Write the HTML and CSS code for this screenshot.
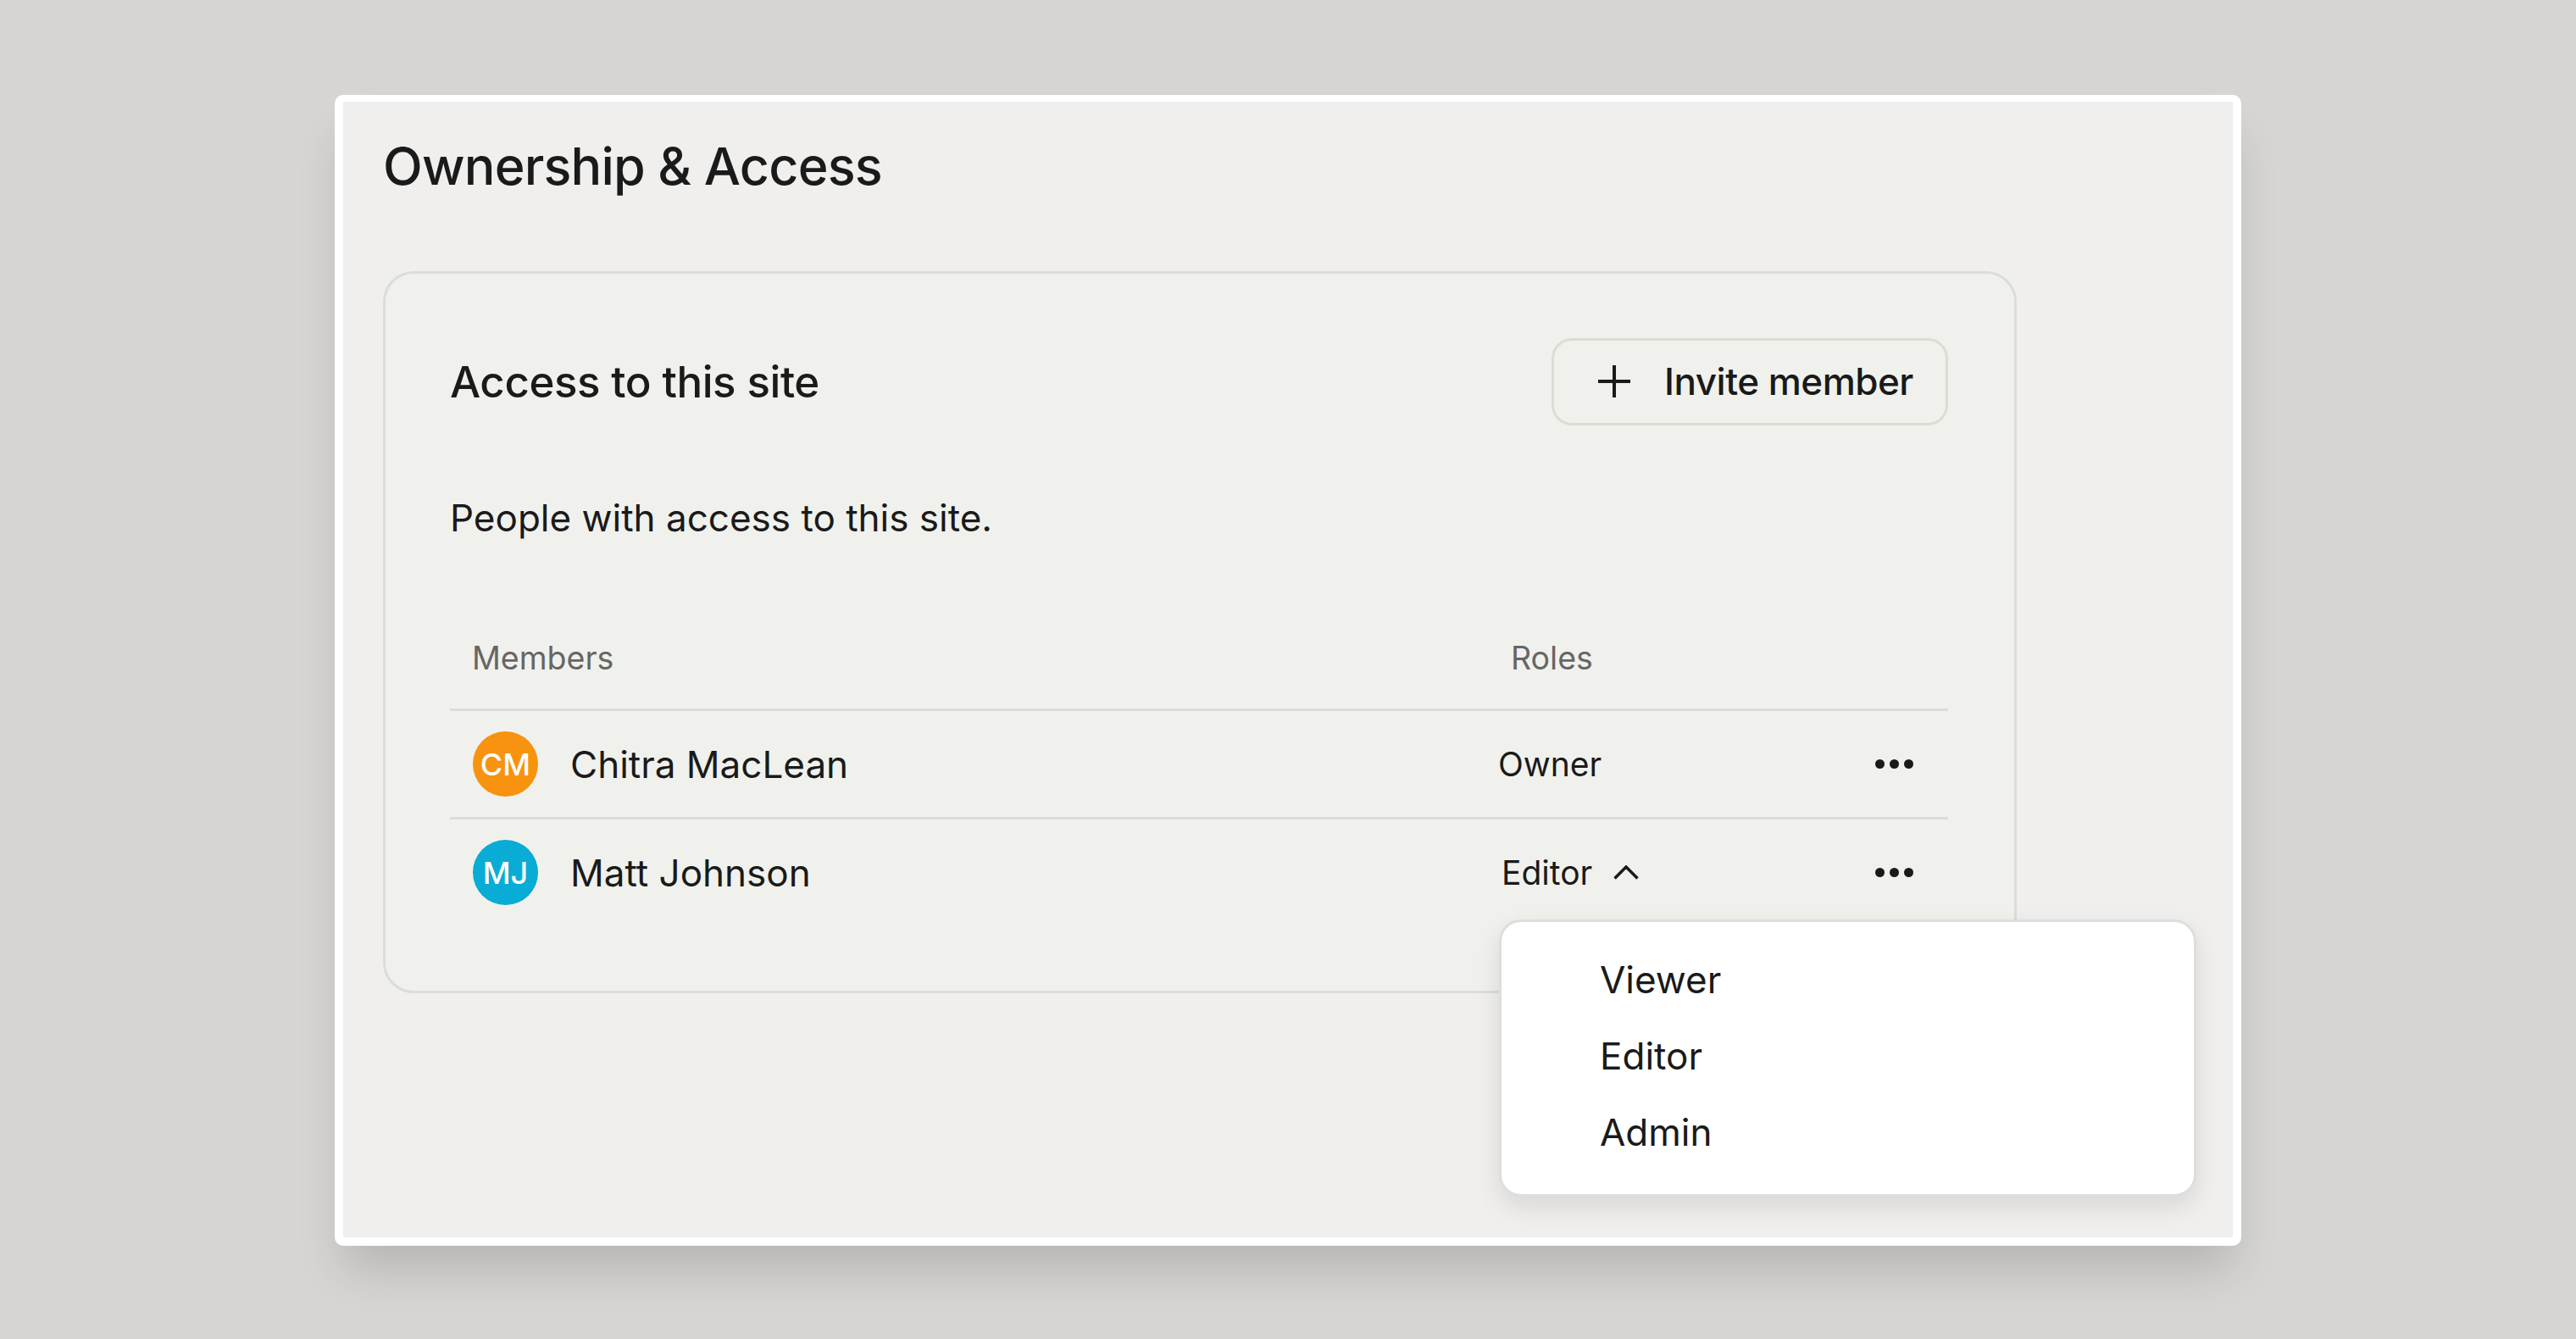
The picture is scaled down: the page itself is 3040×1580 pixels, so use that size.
FILE: index.html
```html
<!DOCTYPE html>
<html lang="en">
<head>
    <meta charset="UTF-8">
    <title>Ownership &amp; Access</title>
    <link rel="stylesheet" href="styles.css">
</head>
<body>
    <div class="window">
        <h1 class="page-title">Ownership &amp; Access</h1>

        <section class="card">
            <div class="card-header">
                <h2 class="card-title">Access to this site</h2>
                <button class="invite-btn" type="button">
                    <svg class="plus-icon" viewBox="0 0 38 38" aria-hidden="true">
                        <path d="M19 0v38M0 19h38"/>
                    </svg>
                    Invite member
                </button>
            </div>

            <p class="card-desc">People with access to this site.</p>

            <div class="table">
                <div class="table-head">
                    <span class="col-members">Members</span>
                    <span class="col-roles">Roles</span>
                </div>

                <div class="table-row">
                    <div class="member">
                        <span class="avatar avatar-orange">CM</span>
                        <span class="member-name">Chitra MacLean</span>
                    </div>
                    <div class="role role-owner">Owner</div>
                    <div class="more"><i></i><i></i><i></i></div>
                </div>

                <div class="table-row">
                    <div class="member">
                        <span class="avatar avatar-blue">MJ</span>
                        <span class="member-name">Matt Johnson</span>
                    </div>
                    <div class="role role-editor">
                        Editor
                        <svg class="chevron" viewBox="0 0 30 17" aria-hidden="true">
                            <path d="M1.5 15.5 15 2l13.500 13.500"/>
                        </svg>
                        <ul class="role-menu">
                            <li>Viewer</li>
                            <li>Editor</li>
                            <li>Admin</li>
                        </ul>
                    </div>
                    <div class="more"><i></i><i></i><i></i></div>
                </div>
            </div>
        </section>
    </div>
</body>
</html>
```

FILE: styles.css
```css
* {
    box-sizing: border-box;
}

body {
    margin: 0;
    height: 1580px;
    overflow: hidden;
    padding: 112px 0 0 395px;
    background-color: #d6d5d1;
    font-family: 'Inter', 'Liberation Sans', sans-serif;
    color: #1a1a1a;
}

.window {
    width: 2250px;
    height: 1358px;
    padding: 0 48px 0 47px;
    background-color: #f0efed;
    border: solid #fff;
    border-width: 8px 10px 10px 10px;
    border-radius: 10px;
    box-shadow: 0 38px 50px -10px rgba(0, 0, 0, 0.15);
}

.page-title {
    margin: 0;
    padding-top: 31px;
    height: 200px;
    font-size: 61px;
    line-height: 90px;
    font-weight: 500;
    letter-spacing: -0.8px;
}

.card {
    width: 1928px;
    height: 852px;
    padding: 75px 78px 0 76px;
    background-color: #f0f1ed;
    border: 3px solid #dcdcd8;
    border-radius: 36px;
}

.card-header {
    display: flex;
    justify-content: space-between;
    align-items: center;
}

.card-title {
    margin: 0;
    font-size: 51px;
    font-weight: 500;
    letter-spacing: -0.4px;
}

.invite-btn {
    display: flex;
    align-items: center;
    gap: 40px;
    width: 468px;
    height: 103px;
    margin-top: 1px;
    padding: 0 0 2px 52px;
    background: transparent;
    border: 3px solid #dcdcd6;
    border-radius: 24px;
    font-family: inherit;
    font-size: 44px;
    font-weight: 500;
    letter-spacing: -0.5px;
    color: #1a1a1a;
}

.plus-icon {
    width: 38px;
    height: 38px;
    fill: none;
    stroke: #1a1a1a;
    stroke-width: 4;
}

.card-desc {
    margin: 82px 0 0 0;
    font-size: 44px;
    line-height: 54px;
}

.table {
    margin-top: 109px;
}

.table-head {
    display: grid;
    grid-template-columns: 1211px 1fr;
    align-items: center;
    height: 92px;
    padding-left: 26px;
    padding-bottom: 30px;
    border-bottom: 3px solid #dcdcd8;
    font-size: 37.500px;
    color: #666663;
}

.col-roles {
    padding-left: 15px;
}

.table-row {
    display: grid;
    grid-template-columns: 1211px 1fr auto;
    align-items: center;
    height: 128px;
    padding: 0 41px 0 26px;
    border-bottom: 3px solid #dcdcd8;
}

.table-row:last-child {
    border-bottom-color: transparent;
}

.member {
    display: flex;
    align-items: center;
    gap: 39px;
}

.avatar {
    display: flex;
    align-items: center;
    justify-content: center;
    width: 77px;
    height: 77px;
    margin-left: 1px;
    border-radius: 50%;
    font-size: 36px;
    font-weight: 500;
    color: #fff;
}

.avatar-orange {
    background-color: #f7930f;
}

.avatar-blue {
    background-color: #08acd4;
}

.member-name {
    margin-left: -1px;
    font-size: 44px;
}

.role {
    position: relative;
    display: flex;
    align-items: center;
    font-size: 39px;
}

.role-editor {
    padding-left: 4px;
    gap: 25px;
}

.chevron {
    width: 30px;
    height: 17px;
    fill: none;
    stroke: #1a1a1a;
    stroke-width: 3.500;
}

.more {
    display: flex;
    gap: 6px;
}

.more i {
    width: 11px;
    height: 11px;
    border-radius: 50%;
    background-color: #1a1a1a;
}

.role-menu {
    position: absolute;
    top: 79px;
    left: 1px;
    z-index: 2;
    width: 823px;
    height: 327px;
    margin: 0;
    padding: 23px 0 0 116px;
    list-style: none;
    background-color: #fff;
    border: 3px solid #dedede;
    border-radius: 26px;
    box-shadow: 0 12px 30px rgba(0, 0, 0, 0.1);
    font-size: 44px;
}

.role-menu li {
    height: 90px;
    line-height: 90px;
}
```
